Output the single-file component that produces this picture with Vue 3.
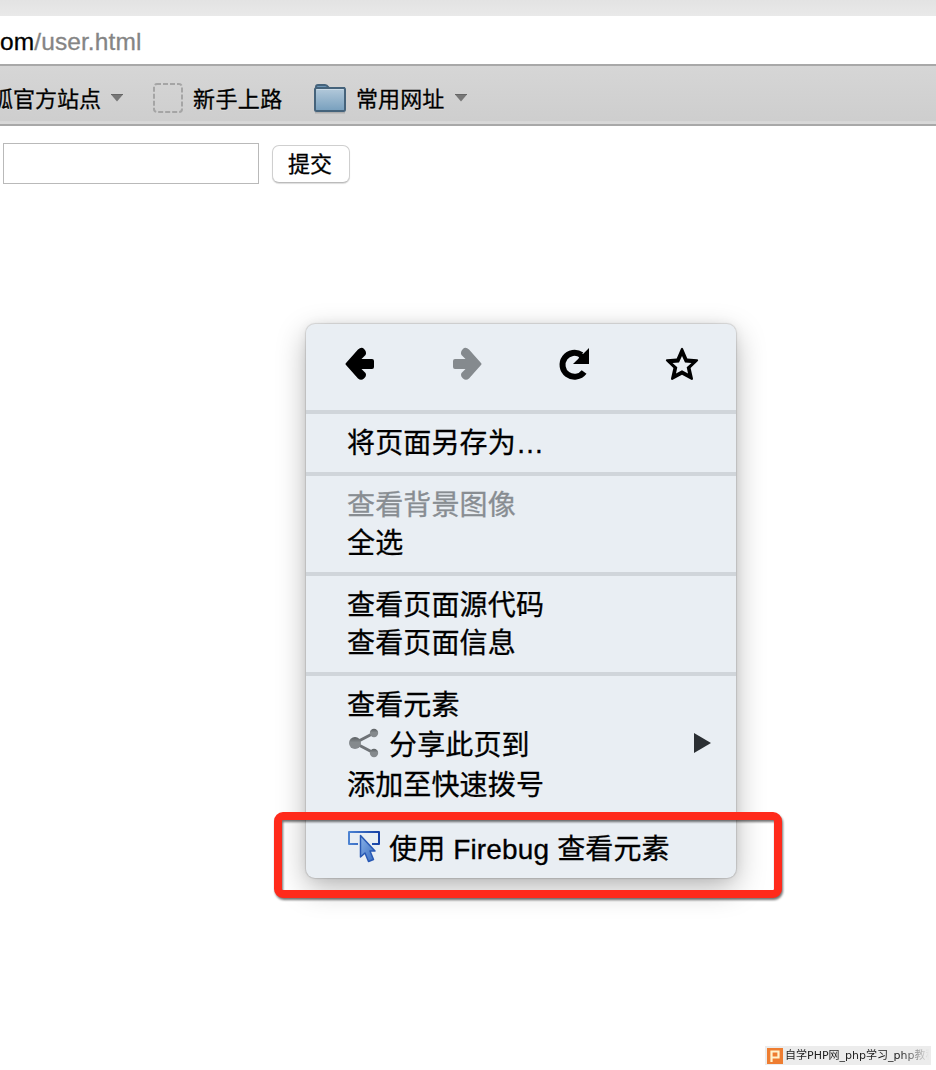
<script setup>
const groups = [
  [{ label: '将页面另存为…' }],
  [{ label: '查看背景图像', disabled: true }, { label: '全选' }],
  [{ label: '查看页面源代码' }, { label: '查看页面信息' }],
  [{ label: '查看元素' }, { label: '分享此页到', icon: 'share', submenu: true }, { label: '添加至快速拨号' }],
  [{ label: '使用 Firebug 查看元素', icon: 'firebug' }],
]
</script>

<template>
  <div class="page">
    <div class="tabstrip"></div>
    <div class="address"><span class="host">om</span><span class="path">/user.html</span></div>
    <nav class="bookmarks">
      <span class="clipped"><span>狐官方站点</span></span>
      <svg class="caret first" width="14" height="8" viewBox="0 0 14 8"><path d="M1 .5H13L7 7.5Z" fill="#777" /><path d="M1 .5H13" stroke="#666" /></svg>
      <svg class="placeholder" width="30" height="30" viewBox="0 0 30 30">
        <rect x="1" y="1" width="28" height="28" rx="3" fill="none" stroke="#a5a5a5" stroke-width="2" stroke-dasharray="5 2" stroke-dashoffset="1" />
      </svg>
      <span class="starter">新手上路</span>
      <svg class="folder" width="34" height="31" viewBox="0 0 34 31">
        <defs>
          <linearGradient id="folderFill" x1="0" y1="0" x2="0" y2="1"><stop stop-color="#b4cadb" /><stop offset="1" stop-color="#779fbd" /></linearGradient>
        </defs>
        <path d="M2 29.5H32" stroke="#999" stroke-width="2" opacity=".6" />
        <path d="M3 8V4Q3 2 5 2H12Q14 2 15 4L16 5H31V9H3Z" fill="#6c96b8" stroke="#45637b" stroke-width="2" />
        <rect x="2" y="5" width="30" height="23" rx="1.5" fill="url(#folderFill)" stroke="#45637b" stroke-width="2" />
        <path d="M3.5 6.5H30.5" stroke="#c9dae7" />
      </svg>
      <span class="common">常用网址</span>
      <svg class="caret" width="14" height="8" viewBox="0 0 14 8"><path d="M1 .5H13L7 7.5Z" fill="#777" /><path d="M1 .5H13" stroke="#666" /></svg>
    </nav>
    <form class="form" @submit.prevent>
      <input class="field" type="text" />
      <button class="submit">提交</button>
    </form>

    <div class="menu">
      <div class="tools">
        <svg width="32" height="34" viewBox="0 0 32 34"><path d="M2 16Q1 17 2 18L14 31.5Q17 34 20 31.6T21.5 26L17.5 22H28Q30 22 30 20V14Q30 12 28 12H17.5L21.5 8Q23 5 20.3 2.2T14 2.5Z" fill="#000" /></svg>
        <svg width="32" height="34" viewBox="0 0 32 34"><path d="M30 16Q31 17 30 18L18 31.5Q15 34 12 31.6T10.500 26L14.500 22H4Q2 22 2 20V14Q2 12 4 12H14.500L10.500 8Q9 5 11.700 2.200T18 2.500Z" fill="#858a8e" /></svg>
        <svg width="32" height="34" viewBox="0 0 32 34"><path d="M23.5 8A12 12 0 1 0 26.1 25" fill="none" stroke="#000" stroke-width="6" /><path d="M31 1V17H15L20.6 11.5 22 7L25 7Z" fill="#000" /></svg>
        <svg width="34" height="34" viewBox="0 0 34 34"><path fill-rule="evenodd" d="M16 1.500Q17 0 18 1.500L22.300 11.500 32 12.200Q34 12.700 32.600 14.200L25.600 21 28 31.500Q28 33.500 26.300 32.700L17 27.800 7.700 32.700Q6 33.500 6 31.500L8.400 21 1.400 14.200Q0 12.700 2 12.200L11.700 11.500ZM17 9 14 15.500 7.500 16 12.300 20.300 11 26.500 17 23.300 23 26.500 21.700 20.300 26.500 16 20 15.500Z" /></svg>
      </div>
      <ul v-for="(group, i) in groups" :key="i" class="group">
        <li v-for="item in group" :key="item.label" class="item" :class="[item.icon, { disabled: item.disabled }]">
          <svg v-if="item.icon === 'share'" class="icon" width="34" height="32" viewBox="0 0 34 32">
            <defs>
              <linearGradient id="nodeFill" x1="0" y1="0" x2="0" y2="1"><stop stop-color="#5b5f62" /><stop offset=".45" stop-color="#858a8d" /><stop offset="1" stop-color="#85898d" /></linearGradient>
            </defs>
            <path d="M27 6 8 16 27 26" fill="none" stroke="#6f7377" stroke-width="3" />
            <circle cx="8" cy="16" r="6" fill="url(#nodeFill)" /><circle cx="27" cy="6" r="4.200" fill="url(#nodeFill)" /><circle cx="27" cy="26" r="4.200" fill="url(#nodeFill)" />
          </svg>
          <svg v-if="item.icon === 'firebug'" class="icon" width="34" height="34" viewBox="0 0 34 34">
            <defs>
              <linearGradient id="frameStroke"><stop stop-color="#4d83d2" /><stop offset="1" stop-color="#1741a5" /></linearGradient>
              <linearGradient id="pointerFill" x1="0" y1="0" x2="1" y2="1"><stop stop-color="#8ab2e8" /><stop offset="1" stop-color="#376bc0" /></linearGradient>
            </defs>
            <path d="M11 14H2V2H32V14H25" fill="none" stroke="url(#frameStroke)" stroke-width="2" stroke-linejoin="round" />
            <path d="M13.500 5.500V27L18 23 21.500 31.500 26.500 29.500 23 21H28Z" fill="url(#pointerFill)" stroke="#2858b4" stroke-width="1.500" stroke-linejoin="round" />
          </svg>
          <span class="label">{{ item.label }}</span>
          <svg v-if="item.submenu" class="more" width="18" height="20" viewBox="0 0 18 20"><path d="M0 0 17 10 0 20Z" fill="#2b2f33" /></svg>
        </li>
      </ul>
    </div>
    <div class="highlight"></div>

    <div class="watermark">
      <svg width="16" height="16" viewBox="0 0 16 16"><rect width="16" height="16" fill="#ee7d31" /><path d="M4.500 14V3.500H11.500V9.500H5" fill="none" stroke="#fff3cd" stroke-width="2.200" /></svg>
      <span class="caption">自学PHP网_php学习_php教程</span>
    </div>
  </div>
</template>

<style>
body { background: #fff; overflow: hidden; }
</style>
<style scoped>
.page { position: relative; height: 1070px; overflow: hidden; background: #fff; color: #000; font-family: "Liberation Sans", "Noto Sans CJK SC", sans-serif; -webkit-text-stroke: .3px currentColor; }
.page * { box-sizing: border-box; }
.tabstrip { height: 16px; background: linear-gradient(#e3e3e3, #e9e9e9); }
.address { height: 48px; font-size: 24.500px; line-height: 52px; white-space: nowrap; letter-spacing: .1px; }
.path { color: #858585; }
.bookmarks { height: 62px; display: flex; align-items: center; border-top: 2px solid #a8a8a8; border-bottom: 2px solid #a8a8a8; background: linear-gradient(#d6d6d6, #cecece 94%, #d8d8d8 96%); font-size: 22px; white-space: nowrap; padding-top: 4px; text-shadow: 0 1px #e4e4e4; }
.bookmarks svg { flex: none; margin-top: 2px; }
.clipped { width: 101px; overflow: hidden; display: flex; justify-content: flex-end; }
.caret.first { margin-left: 9px; }
.placeholder { margin-left: 29px; }
.starter { margin-left: 10px; width: 90px; letter-spacing: .4px; }
.folder { margin-left: 30px; }
.common { margin-left: 9px; width: 98px; letter-spacing: .1px; }
.form { display: flex; gap: 13px; padding: 17px 0 0 3px; }
.field { width: 256px; height: 41px; padding: 0; border: 1px solid #b9b9b9; background: #fff; outline: none; }
.submit { margin-top: 2px; width: 78px; height: 38px; padding: 2px 2px 0 0; border: 1px solid #cfcfcf; border-bottom-color: #bbb; border-radius: 7px; background: #fff; color: #000; font: 22px/34px "Liberation Sans", "Noto Sans CJK SC", sans-serif; box-shadow: 0 1px 1px #ddd; -webkit-text-stroke: .3px #000; }
.menu { position: absolute; left: 306px; top: 324px; width: 430px; height: 554px; border-radius: 9px; background: #e9eef3; box-shadow: 0 0 1px 1px rgba(0,0,0,.12), 0 10px 30px rgba(0,0,0,.28), 0 0 12px rgba(0,0,0,.06); }
.tools { height: 86px; padding: 23px 37px 0 38px; display: flex; justify-content: space-between; }
.group { margin: 0; padding: 9px 0 11px; border-top: 4px solid #d0d5da; list-style: none; }
.item { display: flex; align-items: center; height: 38px; padding: 0 24px 0 41px; font-size: 28px; line-height: 36px; letter-spacing: .15px; white-space: nowrap; }
.label { padding-top: 3px; }
.item.share { height: 42px; }
.item.share svg { margin-top: -2px; }
.item.firebug { height: 40px; margin-top: 1px; }
.item.firebug .icon { margin-top: -2px; }
.icon { flex: none; margin-right: 8px; }
.more { margin-left: auto; }
.disabled { color: #888d92; }
.highlight { position: absolute; left: 274px; top: 812px; width: 508px; height: 86px; border: 8px solid #ff2a1b; border-radius: 9px; filter: drop-shadow(1px 2px 1px rgba(0,0,0,.55)); }
.watermark { position: absolute; left: 765px; top: 1046px; width: 166px; height: 19px; padding: 0 2px; display: flex; align-items: center; gap: 2px; background: #ececec; overflow: hidden; }
.watermark svg { flex: none; }
.caption { flex: 1; overflow: hidden; font: 11px/18px "DejaVu Sans", "Noto Sans CJK SC", sans-serif; padding-top: 1px; white-space: nowrap; color: #222; -webkit-text-stroke: 0; mask-image: linear-gradient(90deg, #000 80%, transparent 100%); }
</style>
